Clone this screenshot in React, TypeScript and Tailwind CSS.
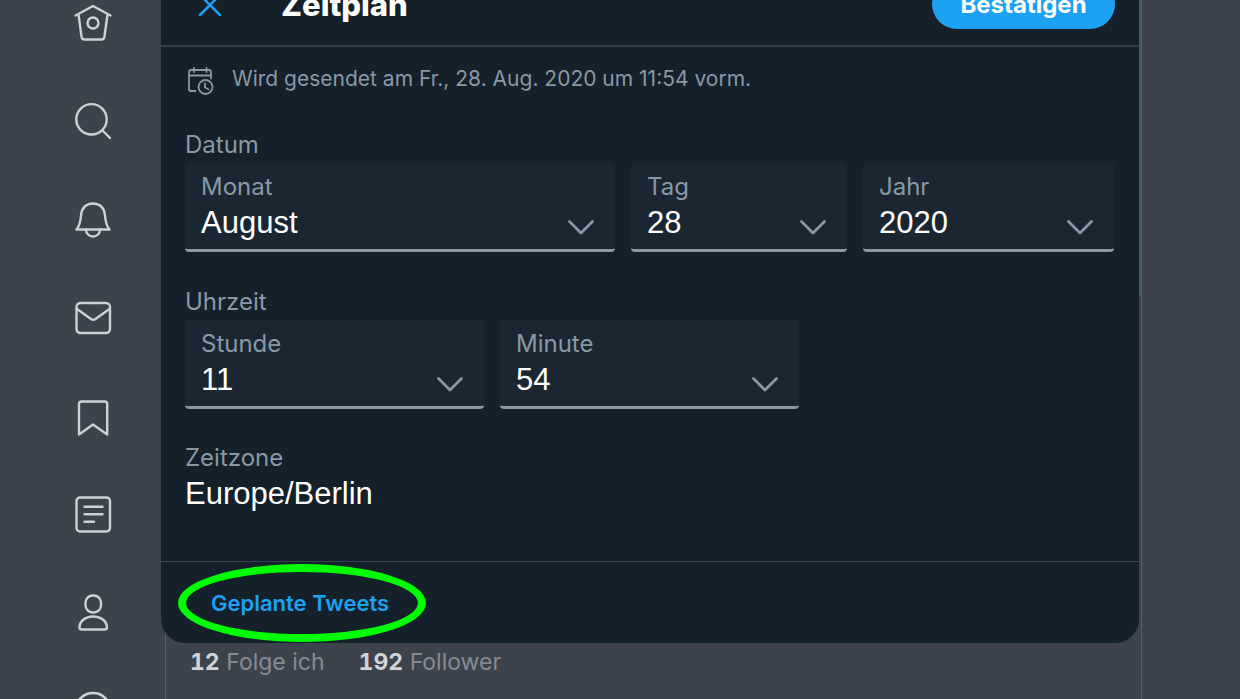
import React, { useState } from 'react';

const navItems = [
  {
    name: 'Startseite',
    icon: (
      <>
        <path d="M2.5 12.5 20 3 37.5 12.5" />
        <path d="M5.5 11.5l3 22q.5 3 3 3h17q2.5 0 3-3l3-22" />
        <circle cx="20" cy="20" r="5.5" />
      </>
    ),
  },
  {
    name: 'Entdecken',
    icon: (
      <>
        <circle cx="18.5" cy="18.3" r="15.2" />
        <path d="M29.5 29.5 37 37" />
      </>
    ),
  },
  {
    name: 'Mitteilungen',
    icon: (
      <>
        <path d="M3.5 30.5c3.5-4 4-8 4.5-14C8.5 9 13 4.5 20 4.5s11.5 4.5 12 12c.5 6 1 10 4.5 14z" />
        <path d="M13 30.5c0 4 3 7 7 7s7-3 7-7" />
      </>
    ),
  },
  {
    name: 'Nachrichten',
    icon: (
      <>
        <rect x="3.5" y="6" width="33.5" height="30" rx="4" />
        <path d="M4 12l14 10q2.2 1.5 4.4 0L36.5 12" />
      </>
    ),
  },
  {
    name: 'Lesezeichen',
    icon: <path d="M6 39.5V9q0-2.5 2.5-2.5h23.200q2.5 0 2.5 2.5v30.5L20 29.5z" />,
  },
  {
    name: 'Listen',
    icon: (
      <>
        <rect x="3.5" y="4.5" width="33.5" height="34" rx="3.5" />
        <path d="M11.5 13.8h18M11.5 21.3h18M11.5 28.8h9.5" />
      </>
    ),
  },
  {
    name: 'Profil',
    icon: (
      <>
        <rect x="12.5" y="4.5" width="15.5" height="17" rx="7.2" />
        <path d="M6.5 36.5c0-6 5.5-11 13.7-11s13.7 5 13.7 11q0 2-2.5 2H9q-2.5 0-2.5-2z" />
      </>
    ),
  },
  {
    name: 'Mehr',
    icon: <circle cx="20" cy="21.5" r="17.5" />,
  },
];

const SelectField = ({ id, label, initial, options }: { id: string; label: string; initial: string; options: string[] }) => {
  const [value, setValue] = useState<string>(initial);

  return (
    <div className="relative rounded-sm border-b-3 border-[#8899a6] bg-[#1a2732]">
      <label htmlFor={id} className="absolute left-4 top-2 text-2xl leading-8 text-[#8899a6]">
        {label}
      </label>
      <select
        id={id}
        value={value}
        onChange={(e) => setValue(e.target.value)}
        className="block h-[86px] w-full appearance-none bg-transparent pl-4 pr-14 pt-[34px] font-['Liberation_Sans',sans-serif] text-[31px] text-white outline-none"
      >
        {options.map((option) => (
          <option key={option} value={option}>
            {option}
          </option>
        ))}
      </select>
      <svg
        className="pointer-events-none absolute bottom-3 right-5 h-5 w-7"
        viewBox="0 0 28 20"
        fill="none"
        stroke="#8899a6"
        strokeWidth="2.8"
        strokeLinecap="round"
        strokeLinejoin="round"
      >
        <path d="M2.5 4.5 14 16 25.5 4.5" />
      </svg>
    </div>
  );
};

const range = (from: number, to: number) => Array.from({ length: to - from + 1 }, (_, i) => String(from + i));

const months = ['Januar', 'Februar', 'März', 'April', 'Mai', 'Juni', 'Juli', 'August', 'September', 'Oktober', 'November', 'Dezember'];

const Sidebar = () => (
  <nav className="-mt-[26px] flex w-[161px] shrink-0 flex-col pl-6">
    {navItems.map((item) => (
      <a key={item.name} href="#" aria-label={item.name} className="flex h-[98px] shrink-0 items-center justify-center">
        <svg
          className="size-10 overflow-visible"
          viewBox="0 0 40 40"
          fill="none"
          stroke="#cdd2d8"
          strokeWidth="2.4"
          strokeLinecap="round"
          strokeLinejoin="round"
        >
          {item.icon}
        </svg>
      </a>
    ))}
  </nav>
);

const ScheduleDialog = () => (
  <section role="dialog" aria-label="Zeitplan" className="relative z-10 mr-0.5 rounded-b-3xl bg-[#14202a]">
    {/* Scrollbar thumb */}
    <div className="absolute -right-0.5 top-0 h-[296px] w-0.5 bg-[#4a5762]" />

    <header className="flex h-[47px] flex-col justify-end overflow-hidden border-b-2 border-[#30424f] pb-4">
      <div className="flex h-[50px] shrink-0 items-center pl-[37px] pr-6">
        <button type="button" aria-label="Schließen" className="mr-[59px]">
          <svg className="size-6" viewBox="0 0 24 24" fill="none" stroke="#1da1f2" strokeWidth="2.5" strokeLinecap="round">
            <path d="M2 3l20 20M22 3 2 23" />
          </svg>
        </button>
        <h1 className="flex-1 pt-0.5 text-[31px] leading-10 font-extrabold text-white">Zeitplan</h1>
        <button type="button" className="h-full w-[183px] rounded-full bg-[#1da1f2] pt-0.5 text-2xl font-bold text-white">
          Bestätigen
        </button>
      </div>
    </header>

    <div className="pl-6 pr-[25px]">
      <div className="flex items-center pt-4 text-[#8899a6]">
        <svg
          className="ml-0.5 mr-[17px] mt-1 size-7"
          viewBox="0 0 28 28"
          fill="none"
          stroke="currentColor"
          strokeWidth="1.8"
          strokeLinecap="round"
          strokeLinejoin="round"
        >
          <path d="M8.5 24H4q-2 0-2-2V5q0-2 2-2h18q2 0 2 2v6.5M2 8.5h22M7 1v4M19.5 1v4" />
          <circle cx="18.5" cy="20" r="7" />
          <path d="M18 16.5v4l3.5 1.8" />
        </svg>
        <p className="text-[21px] leading-8">Wird gesendet am Fr., 28. Aug. 2020 um 11:54 vorm.</p>
      </div>

      <h2 className="mt-[34px] text-2xl leading-8 text-[#8899a6]">Datum</h2>
      <div className="mt-0.5 grid grid-cols-[430fr_216fr_251fr] gap-4">
        <SelectField id="month" label="Monat" initial="August" options={months} />
        <SelectField id="day" label="Tag" initial="28" options={range(1, 31)} />
        <SelectField id="year" label="Jahr" initial="2020" options={range(2020, 2022)} />
      </div>

      <h2 className="mt-[34px] text-2xl leading-8 text-[#8899a6]">Uhrzeit</h2>
      <div className="mt-0.5 grid grid-cols-3 gap-4">
        <SelectField id="hour" label="Stunde" initial="11" options={range(0, 23)} />
        <SelectField id="minute" label="Minute" initial="54" options={range(0, 59)} />
      </div>

      <h2 className="mt-[33px] text-2xl leading-8 text-[#8899a6]">Zeitzone</h2>
      <p className="pb-[47px] font-['Liberation_Sans',sans-serif] text-[31px] leading-10 text-white">Europe/Berlin</p>
    </div>

    <footer className="relative flex h-[82px] items-center border-t border-[#38444d] pl-[50px]">
      <a href="#" className="pt-0.5 text-[22px] font-semibold text-[#1da1f2]">
        Geplante Tweets
      </a>
      <div className="pointer-events-none absolute left-[17px] top-0.5 h-[78px] w-[248px] rounded-[50%] border-8 border-[#00ff00]" />
    </footer>
  </section>
);

export default function App() {
  return (
    <div className="flex h-screen overflow-hidden bg-[#3c434d] font-['Inter',sans-serif]">
      <Sidebar />
      <main className="mr-[98px] flex flex-1 flex-col border-r border-[#555e69]">
        <ScheduleDialog />
        <div className="-mt-6 ml-1 flex flex-1 gap-[34px] border-l border-[#555e69] pl-6 pt-[27px] text-[23px] leading-8 text-[#868c95]">
          <a href="#">
            <strong className="tabular-nums text-[#d0d3d7]">12</strong> Folge ich
          </a>
          <a href="#">
            <strong className="tabular-nums text-[#d0d3d7]">192</strong> Follower
          </a>
        </div>
      </main>
    </div>
  );
}
